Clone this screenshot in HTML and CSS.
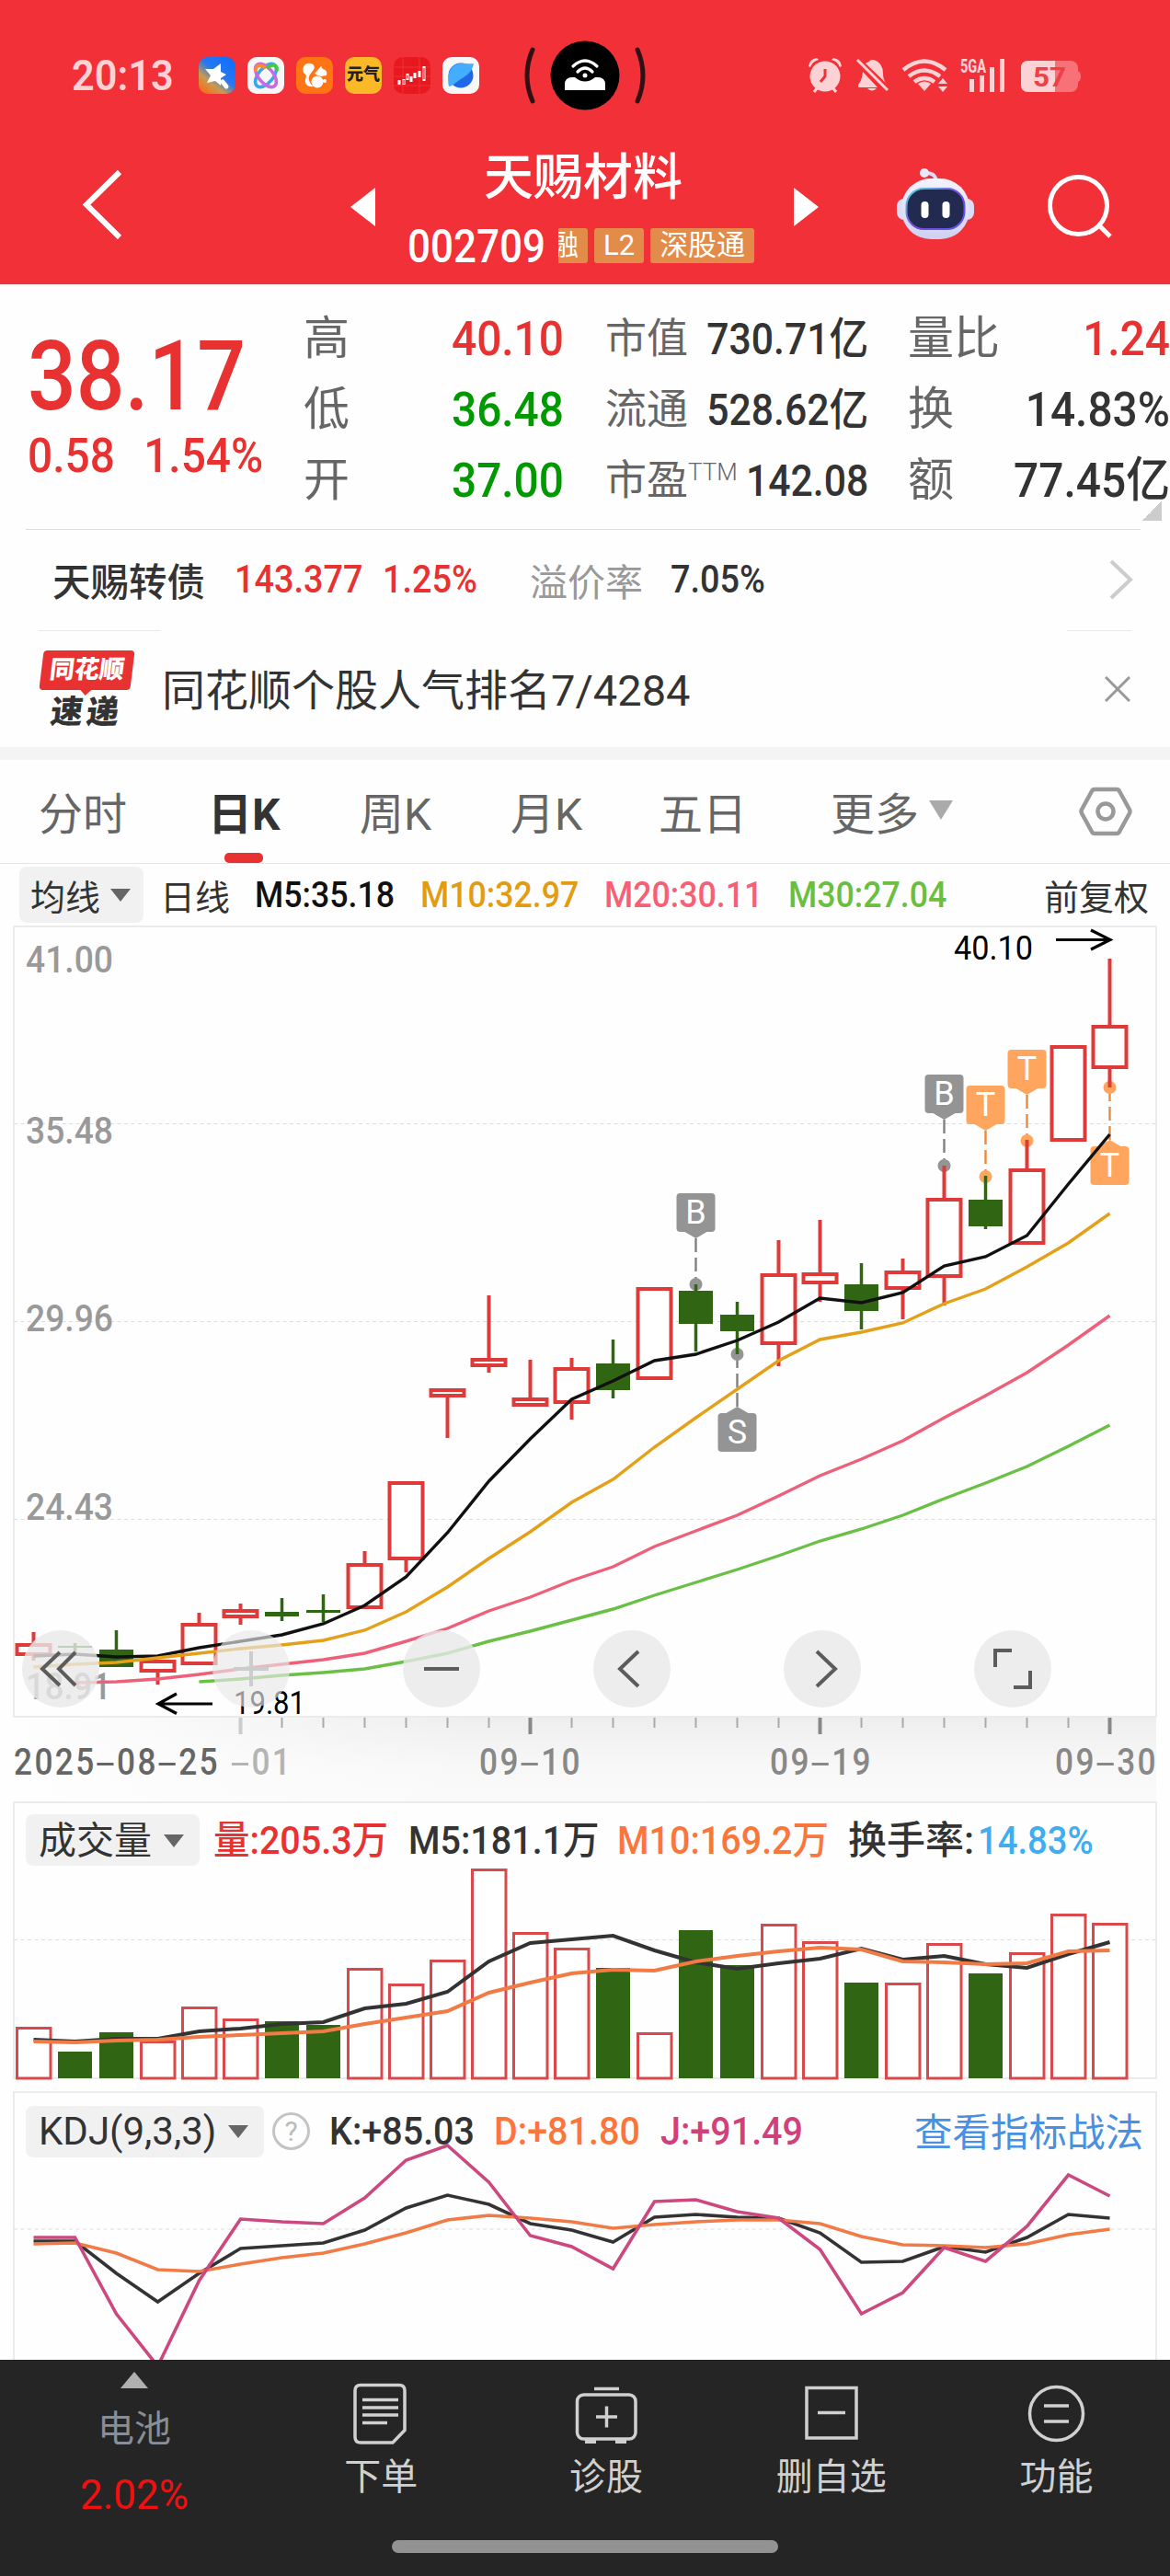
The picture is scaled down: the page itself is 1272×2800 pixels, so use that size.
FILE: index.html
```html
<!DOCTYPE html>
<html lang="zh-CN">
<head>
    <meta charset="UTF-8">
    <meta name="viewport" content="width=device-width, initial-scale=1.0">
    <title>天赐材料 002709</title>
    <link rel="stylesheet" href="styles.css">
</head>
<body>
    <header class="top">
        <div class="status-bar">
            <span class="clock">20:13</span>
            <div class="app-icons">
                <svg class="app" viewBox="0 0 40 40">
                    <defs>
                        <linearGradient id="g1" x1="1" y1="0" x2="0.2" y2="1">
                            <stop offset="0" stop-color="#0a6cff"/><stop offset=".5" stop-color="#2878f0"/><stop offset=".75" stop-color="#c99a50"/><stop offset="1" stop-color="#f5701e"/>
                        </linearGradient>
                    </defs>
                    <rect width="40" height="40" rx="10" fill="url(#g1)"/>
                    <path d="M24 7l0 9 6 3-6 4 0 8-6-5-9 2 4-8-6-7 9 0z" fill="#fff"/>
                    <path d="M26 27l4 5" stroke="#fff" stroke-width="5" stroke-linecap="round"/>
                </svg>
                <svg class="app" viewBox="0 0 40 40">
                    <rect width="40" height="40" rx="10" fill="#f7f7f7"/>
                    <g fill="none" stroke-width="3.6">
                        <ellipse cx="20" cy="20" rx="8" ry="15" transform="rotate(40 20 20)" stroke="#3aa7e8"/>
                        <ellipse cx="20" cy="20" rx="8" ry="15" transform="rotate(-40 20 20)" stroke="#c86ae0"/>
                        <path d="M9 16c-1-8 6-8 11-4" stroke="#ff8a2a"/>
                        <path d="M21 12c6-5 12-4 11 3" stroke="#46c840"/>
                    </g>
                </svg>
                <svg class="app" viewBox="0 0 40 40">
                    <rect width="40" height="40" rx="10" fill="#ff7413"/>
                    <path d="M8 17c-2-6 2-11 7-10 5 0 6 5 3 8-3 4-5 6-4 10 1 4 3 5 5 7-7 1-10-3-9-8 1-3 2-4-2-7z" fill="#fff"/>
                    <circle cx="23" cy="27" r="6.5" fill="#fff"/>
                    <path d="M20 18l7-8 2 3c4 1 5 4 4 7l-6 1c-2-1-4-1-7-3z" fill="#fff"/>
                    <circle cx="31" cy="26" r="2" fill="#fff"/>
                </svg>
                <span class="app yuanqi">元气</span>
                <svg class="app" viewBox="0 0 40 40">
                    <rect width="40" height="40" rx="10" fill="#e8181f"/>
                    <path d="M0 11h40M0 21h40M0 31h40M10 0v40M28 0v40" stroke="#f0393f" stroke-width=".8"/>
                    <path d="M6 25v5M11 24v6M15 18v7M19 21v6M23 17v6M28 15v7M33 10v16" stroke="#fff" stroke-width="3"/>
                    <path d="M11 25v4M15 19.500v4M33 12v12" stroke="#e8181f" stroke-width="1.200"/>
                </svg>
                <svg class="app" viewBox="0 0 40 40">
                    <rect width="40" height="40" rx="10" fill="#f7f7f7"/>
                    <circle cx="20" cy="20" r="13.500" fill="#1f66e8"/>
                    <path d="M7 32C5 24 6 12 15 8c7-3 12 0 19-1-1 8-7 13-14 17-5 3-8 7-13 8z" fill="#43aeff"/>
                </svg>
            </div>
            <svg class="island" width="136" height="76" viewBox="568 44 136 76">
                <path d="M579 54q-12 28 0 56M693 54q12 28 0 56" fill="none" stroke="#301015" stroke-width="5" stroke-linecap="round"/>
                <circle cx="636" cy="82" r="37.500"/>
                <path d="M614 98v-6q0-8 8-8h3q11 9 22 0h3q8 0 8 8v6z" fill="#fff"/>
                <g fill="none" stroke="#fff" stroke-width="3.200" stroke-linecap="round">
                    <path d="M623 72q13-12 26 0M628 78q8-8 16 0"/>
                </g>
                <circle cx="636" cy="82" r="2.500" fill="#fff"/>
            </svg>
            <svg class="signals" width="300" height="44" viewBox="876 60 300 44">
                <g fill="#fcd2d4">
                    <circle cx="897" cy="83" r="16.500"/>
                    <path d="M879 72q1-8 9-9l2 2q-7 2-9 8zM915 72q-1-8-9-9l-2 2q7 2 9 8z"/>
                    <path d="M885 100l4-5M909 100l-4-5" stroke="#fcd2d4" stroke-width="3"/>
                    <path d="M897 75v8l-5 6" fill="none" stroke="#f23037" stroke-width="3"/>
                    <path d="M933 92q4-4 5-14l16 17h-21zM941 69q4-2 6-4h3q10 3 10 15 0 6 3 10zM943 96h10q-5 5-10 0z"/>
                    <path d="M932 65l33 33" stroke="#fcd2d4" stroke-width="3"/>
                    <path d="M1005 99l-7-8q7-5 14 0z"/>
                    <g fill="none" stroke="#fcd2d4" stroke-width="4.500">
                        <path d="M982 76q23-19 46 0M988 83q17-13 34 0M994 89q11-8 22 0"/>
                    </g>
                    <path d="M1020 91l5-6 5 6zM1020 94l5 6 5-6z"/>
                    <path d="M1054 86h5v14h-5zM1065 82h5v18h-5zM1076 73h5v27h-5zM1087 64h5v36h-5z"/>
                    <text x="1044" y="79" font-size="21" font-weight="800" textLength="28" lengthAdjust="spacingAndGlyphs">5GA</text>
                </g>
                <rect x="1110" y="66" width="62" height="34" rx="8" fill="#f87176"/>
                <path d="M1171 77q4 0 4 6t-4 6z" fill="#f87176"/>
                <path d="M1147 66v34h-29q-8 0-8-8v-18q0-8 8-8z" fill="#fcd2d4"/>
                <text x="1123" y="93.500" font-size="29" font-weight="700" fill="#ee4046" textLength="36" lengthAdjust="spacingAndGlyphs">57</text>
            </svg>
        </div>
        <div class="nav">
            <svg class="back" width="46" height="80" viewBox="88 182 46 80"><path d="M130 187L94 222.500 130 258" fill="none" stroke="#fff" stroke-width="6"/></svg>
            <svg class="prev" width="27" height="42" viewBox="0 0 27 42"><path d="M0 21L27 0v42z" fill="#fff"/></svg>
            <div class="stock">
                <h1>天赐材料</h1>
                <div class="code">
                    <span class="num">002709</span>
                    <span class="tag clip"><b>融</b></span>
                    <span class="tag">L2</span>
                    <span class="tag wide">深股通</span>
                </div>
            </div>
            <svg class="next" width="27" height="42" viewBox="0 0 27 42"><path d="M27 21L0 0v42z" fill="#fff"/></svg>
            <svg class="robot" width="86" height="80" viewBox="974 182 86 80">
                <defs>
                    <linearGradient id="shell" x1="0" y1="0" x2="0" y2="1"><stop offset="0" stop-color="#f4f3fd"/><stop offset="1" stop-color="#cfd0f2"/></linearGradient>
                    <linearGradient id="rim" x1="0" y1="0" x2="1" y2="1"><stop offset="0" stop-color="#4fe0d8"/><stop offset=".5" stop-color="#7a48e0"/><stop offset="1" stop-color="#5a5ae8"/></linearGradient>
                </defs>
                <path d="M1005 188q13-1 13 11" fill="none" stroke="#dcdcf5" stroke-width="4"/>
                <circle cx="1005" cy="188" r="5" fill="#e8e8fa"/>
                <rect x="975" y="216" width="84" height="23" rx="8" fill="#dcdcf6"/>
                <rect x="980" y="194" width="74" height="66" rx="32" fill="url(#shell)"/>
                <rect x="985.500" y="205" width="63" height="44" rx="19" fill="#232a50" stroke="url(#rim)" stroke-width="2"/>
                <rect x="1001.500" y="219" width="8" height="18" rx="4" fill="#fff"/>
                <rect x="1024.500" y="219" width="8" height="18" rx="4" fill="#fff"/>
            </svg>
            <svg class="search" width="74" height="74" viewBox="1136 186 74 74"><g fill="none" stroke="#fff" stroke-width="5"><circle cx="1172.500" cy="223.500" r="31"/><path d="M1194 244l13 13"/></g></svg>
        </div>
    </header>

    <section class="quote">
        <div class="price">
            <p class="last num">38.17</p>
            <p class="change num"><span>0.58</span><span>1.54%</span></p>
        </div>
        <dl class="col-a">
            <dt>高</dt><dd class="num up">40.10</dd>
            <dt>低</dt><dd class="num down">36.48</dd>
            <dt>开</dt><dd class="num down">37.00</dd>
        </dl>
        <dl class="col-b">
            <dt>市值</dt><dd class="num">730.71<i>亿</i></dd>
            <dt>流通</dt><dd class="num">528.62<i>亿</i></dd>
            <dt>市盈<sup>TTM</sup></dt><dd class="num">142.08</dd>
        </dl>
        <dl class="col-c">
            <dt>量比</dt><dd class="num up">1.24</dd>
            <dt>换</dt><dd class="num">14.83%</dd>
            <dt>额</dt><dd class="num">77.45<i>亿</i></dd>
        </dl>
        <span class="corner"></span>
    </section>

    <section class="bond">
        <span class="name">天赐转债</span>
        <span class="num up">143.377</span>
        <span class="num up">1.25%</span>
        <span class="muted">溢价率</span>
        <span class="num">7.05%</span>
        <svg width="28" height="46" viewBox="0 0 28 46"><path d="M3 3l21 20L3 43" fill="none" stroke="#ccc" stroke-width="4"/></svg>
    </section>

    <section class="news">
        <div class="badge">
            <span class="badge-top">同花顺</span>
            <span class="badge-bottom">速递</span>
        </div>
        <p>同花顺个股人气排名<span>7/4284</span></p>
        <svg width="28" height="28" viewBox="0 0 28 28"><path d="M1 1l26 26M27 1L1 27" stroke="#999" stroke-width="3"/></svg>
    </section>

    <nav class="tabs">
        <a>分时</a>
        <a class="active">日K</a>
        <a>周K</a>
        <a>月K</a>
        <a>五日</a>
        <a>更多<svg width="26" height="21" viewBox="0 0 26 21"><path d="M0 0h26L13 21z" fill="#aaa"/></svg></a>
        <svg class="gear" width="58" height="54" viewBox="0 0 58 54"><g fill="none" stroke="#999" stroke-width="4.500"><path d="M17 3h24q2 0 3 2l11 20q1 2 0 4L44 49q-1 2-3 2H17q-2 0-3-2L3 29q-1-2 0-4L14 5q1-2 3-2z"/><circle cx="29" cy="27" r="8.500"/></g></svg>
    </nav>

    <div class="legend">
        <span class="pill">均线<i class="tri"></i></span>
        <span class="day">日线</span>
        <span class="num m5">M5:35.18</span>
        <span class="num m10">M10:32.97</span>
        <span class="num m20">M20:30.11</span>
        <span class="num m30">M30:27.04</span>
        <span class="adjust">前复权</span>
    </div>

    <section class="kline">
        <svg id="kline" viewBox="0 1004 1272 863"></svg>
        <div class="tools">
            <button><svg viewBox="0 0 84 84"><path d="M41 24L22 42l19 18M58 24L40 42l18 18"/></svg></button>
            <button class="off"><svg viewBox="0 0 84 84"><path d="M42 23v38M23 42h38"/></svg></button>
            <button><svg viewBox="0 0 84 84"><path d="M23 42h38" stroke-width="5"/></svg></button>
            <button><svg viewBox="0 0 84 84"><path d="M49 23L29 42l20 19"/></svg></button>
            <button><svg viewBox="0 0 84 84"><path d="M36 23l20 19-20 19"/></svg></button>
            <button><svg viewBox="0 0 84 84"><path d="M23 40V22h18M43 62h18V44"/></svg></button>
        </div>
    </section>
    <svg id="axis" viewBox="0 1867 1272 92"></svg>

    <section class="panel volume">
        <svg id="volume" viewBox="0 1958 1272 303"></svg>
        <div class="legend">
            <span class="pill">成交量<i class="tri"></i></span>
            <span class="num up">量:205.3万</span>
            <span class="num">M5:181.1万</span>
            <span class="num orange">M10:169.2万</span>
            <span class="label">换手率:</span>
            <span class="num blue">14.83%</span>
        </div>
    </section>

    <section class="panel kdj">
        <div class="legend">
            <span class="pill">KDJ(9,3,3)<i class="tri"></i></span>
            <span class="help">?</span>
            <span class="num">K:+85.03</span>
            <span class="num orange">D:+81.80</span>
            <span class="num pink">J:+91.49</span>
            <a>查看指标战法</a>
        </div>
        <svg id="kdj" viewBox="0 2273 1272 292"></svg>
    </section>

    <footer class="bottom">
        <div class="items">
            <div class="sector">
                <i class="up-arrow"></i>
                <span>电池</span>
                <b>2.02%</b>
            </div>
            <div class="item">
                <svg width="70" height="70" viewBox="380 2589 70 70"><path d="M393 2592.500h42q6 0 6 6v43l-13 13.500h-35q-6 0-6-6v-50.500q0-6 6-6z"/><path d="M395 2608.500h39M395 2617h39M395 2625h39M395 2633.500h27"/></svg>
                <span>下单</span>
            </div>
            <div class="item">
                <svg width="70" height="70" viewBox="624 2589 70 70"><path d="M646 2596.500h27"/><rect x="627.500" y="2603" width="63.500" height="48" rx="7"/><path d="M648 2627h23M659.500 2615.500v23"/><path d="M636 2654h12M669 2654h12" stroke-width="4"/></svg>
                <span>诊股</span>
            </div>
            <div class="item">
                <svg width="70" height="70" viewBox="869 2589 70 70"><path d="M877 2595.500h54v54.500h-54zM889 2622.500h30"/></svg>
                <span>删自选</span>
            </div>
            <div class="item">
                <svg width="70" height="70" viewBox="1114 2589 70 70"><circle cx="1149.500" cy="2623.500" r="29"/><path d="M1136 2615h27M1136 2632h27"/></svg>
                <span>功能</span>
            </div>
        </div>
        <div class="home-bar"></div>
    </footer>
    <script src="script.js"></script>
</body>
</html>
```
FILE: styles.css
```css
* {
    box-sizing: border-box;
    margin: 0;
    padding: 0;
}

body {
    width: 1272px;
    height: 2800px;
    overflow: hidden;
    background-color: #fefefe;
    color: #333;
    font-family: Roboto, "Noto Sans CJK SC", sans-serif;
}

svg {
    display: block;
    flex: none;
}

i {
    font-style: normal;
}

/* Condensed figures */
.num {
    font-weight: 500;
    white-space: nowrap;
    transform: scaleX(.9);
    transform-origin: left;
}

.up { color: #e83232; }
.down { color: #009a00; }
.orange { color: #fb763b; }
.pink { color: #d0417c; }
.blue { color: #3fadf0; }

/* Header */
.top {
    height: 309px;
    background-color: #f23037;
    border-bottom: 1px solid #c9454b;
}

.status-bar {
    display: flex;
    align-items: center;
    height: 120px;
    padding: 44px 0 0 78px;
}

.clock {
    width: 138px;
    font-size: 46px;
    font-weight: 600;
    line-height: 76px;
    color: #fcd2d4;
    transform: scaleX(.94);
    transform-origin: left;
}

.app-icons {
    display: flex;
    gap: 13px;
    width: 352px;
}

.app {
    width: 40px;
    height: 40px;
}

.yuanqi {
    border-radius: 10px;
    background-color: #fbb927;
    color: #222;
    font-size: 18px;
    font-weight: 900;
    line-height: 38px;
    text-align: center;
}

.signals {
    margin-left: 172px;
}

.nav {
    display: flex;
    height: 188px;
    padding-left: 88px;
}

.back { margin-top: 62px; }
.prev { margin: 84px 0 0 247px; }
.next { margin-top: 84px; }
.robot { margin: 62px 0 0 84px; }
.search { margin: 66px 0 0 76px; }

.stock {
    width: 455px;
    padding-left: 35px;
}

.stock h1 {
    height: 120px;
    padding: 38px 0 0 83px;
    font-size: 54px;
    font-weight: 500;
    line-height: 72px;
    color: #fff;
}

.code {
    display: flex;
    align-items: center;
    height: 56px;
    color: #fff;
}

.code .num {
    flex: none;
    width: 164px;
    font-size: 50px;
    transform: scaleX(.88);
}

.tag {
    flex: none;
    height: 38px;
    margin: -2px 7px 0 0;
    padding: 0 10px;
    border-radius: 3px;
    background-color: #e38c4a;
    font-size: 31px;
    line-height: 37px;
}

.tag.clip {
    display: flex;
    justify-content: flex-end;
    width: 32px;
    overflow: hidden;
    border-radius: 0 3px 3px 0;
}

.tag b {
    font-weight: 400;
}

/* Quote */
.quote {
    position: relative;
    display: flex;
    height: 267px;
    padding: 21px 0 0 30px;
    background-image: linear-gradient(#ddd, #ddd);
    background-repeat: no-repeat;
    background-size: 1212px 1px;
    background-position: 28px 266px;
}

.price {
    flex: none;
    width: 300px;
    color: #e83232;
}

.last {
    height: 126px;
    padding-top: 18px;
    font-size: 105px;
    line-height: 123px;
    transform: scaleX(.885);
}

.change {
    display: flex;
    gap: 34px;
    height: 80px;
    font-size: 52px;
    line-height: 80px;
    transform: scaleX(.92);
}

.quote dl {
    display: grid;
    flex: none;
    grid-template-columns: auto 1fr;
    grid-auto-rows: 77px;
    line-height: 77px;
    font-size: 50px;
}

.quote dt {
    color: #666;
    white-space: nowrap;
}

.quote dd {
    font-size: 52px;
    text-align: right;
    transform: scaleX(.92);
    transform-origin: right;
}

.quote .col-a { width: 283px; }
.quote .col-b { width: 331px; padding-left: 45px; font-size: 45px; }
.quote .col-b dd { margin-left: -60px; font-size: 48px; transform: scaleX(.89); }
.quote .col-c { width: 328px; padding-left: 43px; }

sup {
    font-size: 26px;
    font-weight: 300;
    line-height: 0;
    vertical-align: 16px;
}

.corner {
    position: absolute;
    right: 9px;
    bottom: 10px;
    width: 21px;
    height: 21px;
    background: linear-gradient(135deg, transparent 50%, #ccc 50%);
}

.bond {
    display: grid;
    grid-template-columns: 198px 161px 160px 153px 476px auto;
    align-items: center;
    height: 110px;
    padding: 0 0 3px 57px;
    font-size: 42px;
    background-image: linear-gradient(#e8e8e8, #e8e8e8), linear-gradient(#e8e8e8, #e8e8e8);
    background-repeat: no-repeat;
    background-size: 133px 1px, 70px 1px;
    background-position: 42px 109px, 1160px 109px;
}

.bond .name { font-size: 41.500px; font-weight: 500; }
.muted { color: #999; font-size: 41px; }

.news {
    display: flex;
    align-items: center;
    height: 126px;
    padding-left: 43px;
    font-size: 47px;
}

.news p {
    width: 1025px;
    margin: -5px 0 0 -2px;
}

.news span { white-space: nowrap; }

.badge {
    display: flex;
    flex-direction: column;
    align-items: center;
    width: 135px;
    padding: 2px 32px 0 0;
    font-weight: 900;
    font-size: 27px;
}

.badge-top {
    position: relative;
    width: 99px;
    height: 43px;
    border-radius: 4px;
    background-color: #e83232;
    color: #fff;
    line-height: 42px;
    text-align: center;
    transform: skewX(-7deg);
}

.badge-top::after {
    content: "";
    position: absolute;
    left: 44px;
    top: 42px;
    border: 7px solid transparent;
    border-top-color: #e83232;
    border-bottom: 0;
}

.badge-bottom {
    margin-top: 6px;
    font-size: 35px;
    line-height: 38px;
    letter-spacing: 4px;
    transform: skewX(-7deg);
}

/* Period tabs */
.tabs {
    display: grid;
    grid-template-columns: 184px 165px 164px 161px 187px 270px auto;
    align-items: center;
    height: 127px;
    padding-left: 42px;
    border-top: 14px solid #f4f4f4;
    border-bottom: 1px solid #e4e4e4;
    font-size: 48px;
    color: #666;
}

.tabs a {
    position: relative;
    display: flex;
    align-items: center;
    gap: 11px;
    height: 100%;
    padding-bottom: 3px;
}

.tabs .active {
    color: #333;
    font-weight: 700;
}

.active::after {
    content: "";
    position: absolute;
    left: 18px;
    bottom: 0;
    width: 42px;
    height: 11px;
    border-radius: 5px;
    background-color: #e83232;
}

/* Indicator rows */
.legend {
    display: grid;
    grid-template-columns: 153px 103px 180px 200px 200px 278px auto;
    align-items: center;
    height: 65px;
    padding: 2px 0 0 21px;
    font-size: 38px;
    white-space: nowrap;
}

.legend .num {
    transform: scaleX(.94);
}

.pill {
    display: flex;
    align-items: center;
    justify-content: space-between;
    width: 135px;
    height: 61px;
    padding: 0 14px 0 12px;
    border-radius: 8px;
    background-color: #f1f1f1;
}

.tri {
    border: 11px solid transparent;
    border-top: 14px solid #666;
    border-bottom: 0;
}

.m5 { color: #111; }
.m10 { color: #e39c12; }
.m20 { color: #f75f76; }
.m30 { color: #6abf40; }

.kline {
    position: relative;
    height: 863px;
}

#kline {
    overflow: visible;
}

.tools {
    position: absolute;
    left: 24px;
    top: 768px;
    display: flex;
    gap: 123px;
}

.tools button {
    width: 84px;
    height: 84px;
    border: 0;
    border-radius: 50%;
    background-color: rgba(232, 232, 232, .8);
}

.tools path {
    fill: none;
    stroke: #5c5c5c;
    stroke-width: 4;
}

.tools .off {
    background-color: rgba(232, 232, 232, .65);
}

.tools .off path {
    stroke: #ccc;
}

.panel {
    display: grid;
}

.panel > * {
    grid-area: 1 / 1;
}

.volume {
    height: 315px;
    margin-top: -1px;
}

.volume .legend {
    grid-template-columns: 204px 212px 227px 251px 141px auto;
    height: 56px;
    margin-top: 14px;
    padding: 0 0 0 28px;
    font-size: 42px;
    line-height: 48px;
}

.volume .label {
    font-weight: 500;
}

.volume .num,
.volume .label {
    margin-top: 1px;
}

.volume .blue {
    transform: scaleX(.91);
}

.volume .pill {
    width: 189px;
    height: 56px;
    padding: 1px 17px 0 14px;
    font-size: 41px;
}

.kdj .legend {
    grid-template-columns: 268px 62px 179px 181px 276px auto;
    height: 58px;
    margin-top: 13px;
    padding: 2px 0 0 28px;
    font-size: 42px;
}

.kdj .pill {
    width: 259px;
    height: 56px;
    padding: 0 17px 0 14px;
}

.kdj a {
    margin-top: -3px;
    font-size: 41.500px;
    color: #4a90e2;
}

.help {
    width: 41px;
    height: 41px;
    border: 3px solid #c4c4c4;
    border-radius: 50%;
    color: #bbb;
    font-size: 30px;
    line-height: 36px;
    text-align: center;
}

/* Bottom bar */
.bottom {
    height: 235px;
    background-color: #252525;
    color: #d0d0d0;
    font-size: 40px;
}

.items {
    display: grid;
    grid-template-columns: 292px repeat(4, 244.700px);
    height: 196px;
}

.sector,
.item {
    display: flex;
    flex-direction: column;
    align-items: center;
}

.sector {
    padding-top: 13px;
    color: #868e98;
}

.up-arrow {
    border: 15px solid transparent;
    border-bottom: 18px solid #b0b0b0;
    border-top: 0;
}

.sector span {
    margin-top: 15px;
    line-height: 60px;
}

.sector b {
    margin-top: 11px;
    color: #f01010;
    font-size: 44px;
    font-weight: 400;
    line-height: 60px;
}

.item svg {
    margin-top: 24px;
    fill: none;
    stroke: #d0d0d0;
    stroke-width: 3.500;
}

.item span {
    margin-top: 4px;
    line-height: 60px;
}

.home-bar {
    width: 420px;
    height: 14px;
    margin: 0 auto;
    border-radius: 7px;
    background-color: #929292;
}
```
FILE: script.js
```js
// x position of the n-th trading day
const x = i => 36.5 + i * 45;

// [body top, body bottom, high, low, rising]
const candles = [
    [1786, 1800, 1774, 1805, 1], [1789, 1791, 1786, 1799, 0], [1793, 1812, 1772, 1812, 0],
    [1804, 1818, 1804, 1831, 1], [1764, 1810, 1753, 1810, 1], [1749, 1759, 1743, 1766, 1],
    [1752, 1757, 1737, 1762, 0], [1750, 1753, 1733, 1763, 0], [1699, 1749, 1686, 1749, 1],
    [1610, 1696, 1610, 1709, 1], [1509, 1519, 1509, 1563, 1], [1476, 1486, 1408, 1492, 1],
    [1519, 1529, 1478, 1529, 1], [1486, 1526, 1476, 1543, 1], [1482, 1511, 1456, 1520, 0],
    [1399, 1500, 1399, 1500, 1], [1403, 1439, 1396, 1469, 0], [1429, 1447, 1415, 1472, 0],
    [1384, 1462, 1348, 1485, 1], [1383, 1396, 1326, 1415, 1], [1396, 1425, 1373, 1445, 0],
    [1381, 1402, 1368, 1434, 1], [1302, 1389, 1267, 1419, 1], [1304, 1333, 1278, 1336, 0],
    [1270, 1353, 1239, 1353, 1], [1136, 1241, 1136, 1241, 1], [1114, 1162, 1042, 1182, 1]
];

const ma5 = [1800, 1798, 1801, 1800, 1791, 1784, 1777, 1765, 1745, 1714, 1666, 1610, 1564, 1521, 1501, 1479, 1472, 1457, 1437, 1411, 1416, 1405, 1376, 1366, 1343, 1287, 1233];
const ma10 = [1812, 1809, 1807, 1802, 1797, 1792, 1788, 1783, 1772, 1752, 1725, 1694, 1665, 1633, 1608, 1573, 1541, 1510, 1479, 1456, 1448, 1438, 1417, 1401, 1377, 1351, 1319];
const ma20 = [1829, 1828, 1825, 1820, 1814, 1809, 1804, 1797, 1784, 1770, 1751, 1736, 1718, 1703, 1681, 1664, 1647, 1626, 1604, 1586, 1566, 1541, 1517, 1492, 1462, 1430];
const ma30 = [1828, 1825, 1821, 1818, 1814, 1806, 1797, 1784, 1773, 1761, 1749, 1734, 1720, 1706, 1691, 1675, 1662, 1647, 1629, 1612, 1594, 1572, 1549];

const volumeTops = [2203, 2230, 2209, 2218, 2181, 2194, 2197, 2201, 2139, 2156, 2130, 2031, 2100, 2117, 2139, 2209, 2098, 2136, 2091, 2110, 2155, 2155, 2112, 2145, 2122, 2080, 2090];
const volMa5 = [2217, 2219, 2216, 2216, 2208, 2205, 2200, 2198, 2183, 2178, 2165, 2132, 2112, 2108, 2104, 2120, 2133, 2140, 2134, 2129, 2118, 2130, 2126, 2135, 2139, 2124, 2111];
const volMa10 = [2219, 2220, 2218, 2217, 2214, 2212, 2210, 2208, 2200, 2193, 2186, 2166, 2155, 2145, 2141, 2142, 2132, 2126, 2121, 2117, 2119, 2132, 2133, 2135, 2134, 2121, 2120];

const k = [2436, 2436, 2471, 2502, 2471, 2444, 2441, 2438, 2424, 2400, 2386, 2396, 2417, 2424, 2437, 2410, 2407, 2410, 2411, 2427, 2459, 2458, 2442, 2448, 2432, 2407, 2411];
const d = [2439, 2438, 2449, 2467, 2469, 2461, 2454, 2449, 2439, 2427, 2413, 2408, 2411, 2415, 2422, 2418, 2415, 2413, 2413, 2417, 2431, 2440, 2441, 2443, 2439, 2429, 2423];
const j = [2432, 2432, 2515, 2572, 2479, 2412, 2415, 2417, 2389, 2348, 2332, 2372, 2430, 2442, 2466, 2393, 2391, 2404, 2411, 2445, 2515, 2492, 2443, 2458, 2420, 2364, 2387];

// [day, letter, box top, dot y, colour]
const marks = [
    [16, 'B', 1297, 1396, '#949494'], [17, 'S', 1536, 1472, '#949494'],
    [22, 'B', 1168, 1267, '#949494'], [23, 'T', 1180, 1279, '#ffa55e'],
    [24, 'T', 1141, 1240, '#ffa55e'], [26, 'T', 1246, 1182, '#ffa55e']
];

function line(points, color, width = 3.4, start = 0) {
    const pts = points.map((y, i) => `${x(i + start)},${y}`).join(' ');
    return `<polyline points="${pts}" fill="none" stroke="${color}" stroke-width="${width}"/>`;
}

function grid(y) {
    return `<path d="M15 ${y}H1257" stroke="#ddd" stroke-width="1.2" stroke-dasharray="4 3.5"/>`;
}

function label(text, left, y, width, size, fill, weight = 500) {
    return `<text x="${left}" y="${y}" textLength="${width}" lengthAdjust="spacingAndGlyphs" font-size="${size}" fill="${fill}" font-weight="${weight}">${text}</text>`;
}

function candle([top, bottom, high, low, rising], i) {
    const c = x(i);
    if (!rising) {
        return `<rect x="${c - 18.5}" y="${top}" width="37" height="${bottom - top}" fill="#306613"/><path d="M${c} ${high}V${low}" stroke="#306613" stroke-width="3.500"/>`;
    }
    return `<path d="M${c} ${high}V${top}M${c} ${bottom}V${low}" stroke="#de3a3a" stroke-width="4"/>
        <rect x="${c - 18}" y="${top + 2}" width="36" height="${bottom - top - 4}" fill="#fff" stroke="#de3a3a" stroke-width="4"/>`;
}

function mark([i, letter, top, dot, color]) {
    const c = x(i);
    const below = top > dot;
    const edge = below ? top : top + 42;
    const tip = below ? top - 7 : top + 49;
    return `<path d="M${c} ${tip}V${dot}" stroke="${color === '#949494' ? '#808080' : '#ea8a3c'}" stroke-width="2.4" stroke-dasharray="15 6"/>
        <circle cx="${c}" cy="${dot}" r="7" fill="${color}"/>
        <path d="M${c - 12} ${edge}L${c} ${tip}L${c + 12} ${edge}z" fill="${color}"/>
        <rect x="${c - 21}" y="${top}" width="42" height="42" rx="4" fill="${color}"/>
        <text x="${c}" y="${top + 33}" font-size="36" fill="#fff" text-anchor="middle">${letter}</text>`;
}

document.getElementById('kline').innerHTML =
    '<rect x="15" y="1007" width="1242" height="859" fill="none" stroke="#ebebeb" stroke-width="2"/>' +
    [1221.5, 1436.5, 1651.5].map(grid).join('') +
    label('41.00', 28, 1057, 95, 41, '#999') +
    label('35.48', 28, 1243, 95, 41, '#999') +
    label('29.96', 28, 1447, 95, 41, '#999') +
    label('24.43', 28, 1652, 95, 41, '#999') +
    label('18.91', 28, 1847, 93, 41, '#999') +
    marks.map(mark).join('') +
    candles.map(candle).join('') +
    line(ma5, '#111') + line(ma10, '#e3a018') + line(ma20, '#ee6079', 3.4, 1) + line(ma30, '#6abf45', 3.4, 4) +
    label('40.10', 1037, 1043, 86, 36, '#000', 400) +
    label('19.81', 254, 1863, 78, 35, '#000', 400) +
    '<path d="M1148 1021.5h58M1186 1011l21 10.500-21 10.500M231 1852h-58M192 1841l-20 11 20 10.500" fill="none" stroke="#000" stroke-width="3.200"/>';

// date axis
let ticks = '';
for (let i = 5; i < 27; i++) {
    const major = (i - 5) % 7 === 0;
    ticks += `<path d="M${x(i)} 1867v${major ? 18 : 11}" stroke="${i === 5 ? '#ccc' : major ? '#888' : '#aaa'}" stroke-width="${major ? 4 : 2}"/>`;
}

// one glyph per cell, so dashes are as wide as digits
function date(text, left, fill) {
    return [...text].map((ch, i) => {
        const c = left + 11 + i * 22.4;
        return ch === '-'
            ? `<text transform="translate(${c} 1930) scale(1.9 1)" text-anchor="middle" font-size="40" font-weight="400" fill="${fill}">-</text>`
            : `<text transform="translate(${c} 1929) scale(.86 1)" text-anchor="middle" font-size="41" font-weight="500" fill="${fill}">${ch}</text>`;
    }).join('');
}

document.getElementById('axis').innerHTML =
    `<defs><linearGradient id="fade" x1="0" y1="0" x2="0" y2="1"><stop offset="0" stop-color="#eee"/><stop offset=".6" stop-color="#f8f8f8"/><stop offset="1" stop-color="#fafafa"/></linearGradient>
    <linearGradient id="side"><stop offset="0" stop-color="#fefefe"/><stop offset="1" stop-color="#fefefe" stop-opacity="0"/></linearGradient></defs>
    <rect x="15" y="1867" width="1242" height="92" fill="url(#fade)"/><rect x="15" y="1867" width="500" height="92" fill="url(#side)"/>` +
    ticks + date('2025-08-25', 14, '#666') + date('-01', 250, '#b4b4b4') +
    date('09-10', 520, '#888') + date('09-19', 836, '#888') + date('09-30', 1146, '#888');

document.getElementById('volume').innerHTML =
    '<path d="M15 2259V1959H1257V2259z" fill="none" stroke="#ebebeb" stroke-width="2"/>' + grid(2108.5) +
    volumeTops.map((top, i) => candles[i][4]
        ? `<rect x="${x(i) - 18}" y="${top + 1.5}" width="36.500" height="${2257.5 - top}" fill="#fff" stroke="#d9494b" stroke-width="3"/>`
        : `<rect x="${x(i) - 18.5}" y="${top}" width="37" height="${2259 - top}" fill="#306613"/>`).join('') +
    line(volMa5, '#333', 4) + line(volMa10, '#f27a45', 4);

document.getElementById('kdj').innerHTML =
    '<path d="M15 2570V2274H1257V2570" fill="none" stroke="#ebebeb" stroke-width="2"/>' + grid(2423) +
    line(k, '#333', 3.6) + line(d, '#f27a45', 3.6) + line(j, '#cc487f', 3.6);
```
